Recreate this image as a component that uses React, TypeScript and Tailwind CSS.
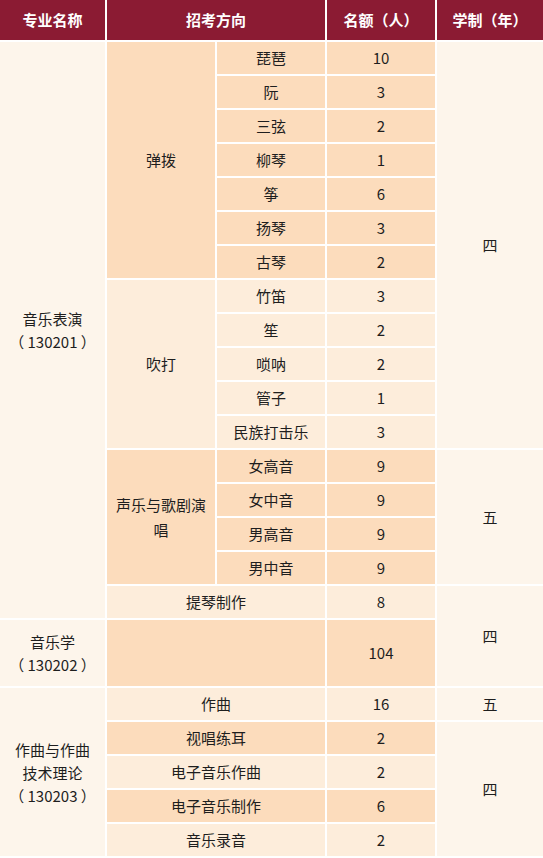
import React from "react";

const D = "bg-[#fcdcbc]";
const L = "bg-[#fdeddb]";
const S = "bg-[#fdf5eb]";

export default function App() {
  const base =
    "flex items-center justify-center text-center text-[15px] text-[#1e1e1e]";
  const sub: [string, string, string, string][] = [
    ["琵琶", "10", D, "row-start-2"],
    ["阮", "3", D, "row-start-3"],
    ["三弦", "2", D, "row-start-4"],
    ["柳琴", "1", D, "row-start-5"],
    ["筝", "6", D, "row-start-6"],
    ["扬琴", "3", D, "row-start-7"],
    ["古琴", "2", D, "row-start-8"],
    ["竹笛", "3", L, "row-start-9"],
    ["笙", "2", L, "row-start-10"],
    ["唢呐", "2", L, "row-start-11"],
    ["管子", "1", L, "row-start-12"],
    ["民族打击乐", "3", L, "row-start-13"],
    ["女高音", "9", D, "row-start-14"],
    ["女中音", "9", D, "row-start-15"],
    ["男高音", "9", D, "row-start-16"],
    ["男中音", "9", D, "row-start-17"],
  ];
  const wide: [string, string, string, string][] = [
    ["提琴制作", "8", L, "row-start-18"],
    ["作曲", "16", L, "row-start-21"],
    ["视唱练耳", "2", D, "row-start-22"],
    ["电子音乐作曲", "2", L, "row-start-23"],
    ["电子音乐制作", "6", D, "row-start-24"],
    ["音乐录音", "2", L, "row-start-25"],
  ];
  return (
    <div
      className="w-[543px] bg-white"
      style={{ fontFamily: '"Noto Sans CJK SC", "Noto Sans", sans-serif' }}
    >
      <div className="grid grid-cols-[105px_108px_108px_108px_106px] grid-rows-[40px_repeat(24,32px)] gap-[2px] pb-[2px]">
        {/* header */}
        <div className="col-start-1 row-start-1 flex items-center justify-center bg-[#8b1b33] text-[15px] font-bold text-white">
          专业名称
        </div>
        <div className="col-start-2 col-span-2 row-start-1 flex items-center justify-center bg-[#8b1b33] text-[15px] font-bold text-white">
          招考方向
        </div>
        <div className="col-start-4 row-start-1 flex items-center justify-center bg-[#8b1b33] text-[15px] font-bold text-white">
          名额（人）
        </div>
        <div className="col-start-5 row-start-1 flex items-center justify-center bg-[#8b1b33] text-[15px] font-bold text-white">
          学制（年）
        </div>

        {/* column 1 */}
        <div className={`${base} ${S} col-start-1 row-start-2 row-span-17 flex-col leading-[23px]`}>
          <span>音乐表演</span>
          <span className="whitespace-pre">（ 130201 ）</span>
        </div>
        <div className={`${base} ${S} col-start-1 row-start-19 row-span-2 flex-col leading-[23px]`}>
          <span>音乐学</span>
          <span className="whitespace-pre">（ 130202 ）</span>
        </div>
        <div className={`${base} ${S} col-start-1 row-start-21 row-span-5 flex-col leading-[23px]`}>
          <span>作曲与作曲</span>
          <span>技术理论</span>
          <span className="whitespace-pre">（ 130203 ）</span>
        </div>

        {/* column 2 groups */}
        <div className={`${base} ${D} col-start-2 row-start-2 row-span-7`}>弹拨</div>
        <div className={`${base} ${L} col-start-2 row-start-9 row-span-5`}>吹打</div>
        <div className={`${base} ${D} col-start-2 row-start-14 row-span-4 px-[6px] leading-[25px]`}>
          声乐与歌剧演唱
        </div>

        {sub.map(([name, n, c, r]) => (
          <React.Fragment key={name}>
            <div className={`${base} ${c} ${r} col-start-3`}>{name}</div>
            <div className={`${base} ${c} ${r} col-start-4`}>{n}</div>
          </React.Fragment>
        ))}

        {wide.map(([name, n, c, r]) => (
          <React.Fragment key={name}>
            <div className={`${base} ${c} ${r} col-start-2 col-span-2`}>{name}</div>
            <div className={`${base} ${c} ${r} col-start-4`}>{n}</div>
          </React.Fragment>
        ))}

        {/* 音乐学 */}
        <div className={`${base} ${D} col-start-2 col-span-2 row-start-19 row-span-2`}></div>
        <div className={`${base} ${D} col-start-4 row-start-19 row-span-2`}>104</div>

        {/* column 5 */}
        <div className={`${base} ${S} col-start-5 row-start-2 row-span-12`}>四</div>
        <div className={`${base} ${S} col-start-5 row-start-14 row-span-4`}>五</div>
        <div className={`${base} ${S} col-start-5 row-start-18 row-span-3`}>四</div>
        <div className={`${base} ${S} col-start-5 row-start-21`}>五</div>
        <div className={`${base} ${S} col-start-5 row-start-22 row-span-4`}>四</div>
      </div>
    </div>
  );
}
